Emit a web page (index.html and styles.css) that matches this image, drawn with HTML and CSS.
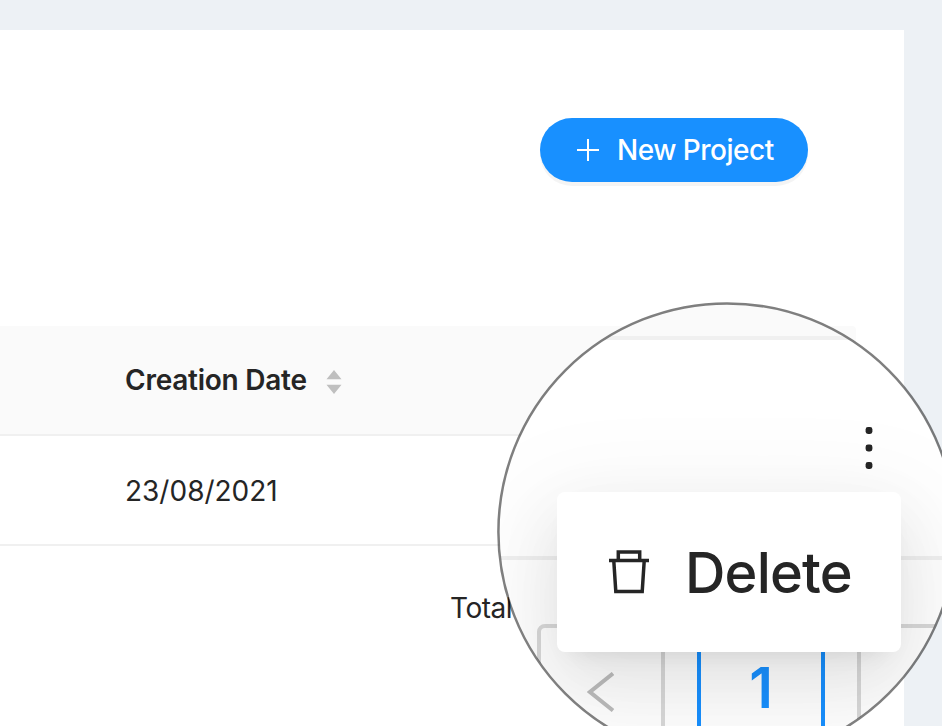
FILE: index.html
```
<!DOCTYPE html>
<html lang="en">
<head>
<meta charset="utf-8">
<title>Projects</title>
<link rel="stylesheet" href="styles.css">
</head>
<body>
<main class="card">
  <div class="toolbar">
    <button class="new-project" type="button">
      <svg class="plus" viewBox="0 0 24 24"><path d="M12 1v22M1 12h22"/></svg>
      <span class="label">New Project</span>
    </button>
  </div>
  <section class="table">
    <div class="row head">
      <span class="title">Creation Date</span>
      <svg class="sorter" viewBox="0 0 16 24"><path d="M8 0l7.500 9.300H.5zM8 24L.5 14.700h15z"/></svg>
    </div>
    <div class="row"><span class="date">23/08/2021</span></div>
  </section>
  <footer class="footer"><span class="total">Total</span></footer>
</main>
<aside class="lens">
  <div class="lens-head"></div>
  <div class="lens-row">
    <svg class="dots" viewBox="0 0 8 43"><rect x=".6" y=".1" width="6.800" height="6.800" rx="2.400"/><rect x=".6" y="17.600" width="6.800" height="6.800" rx="2.400"/><rect x=".6" y="35.100" width="6.800" height="6.800" rx="2.400"/></svg>
  </div>
  <div class="pages">
    <div class="page"><svg class="chevron" viewBox="0 0 28 40"><path d="M26 1.500L3 20l23 18.500"/></svg></div>
    <div class="page active"><span>1</span></div>
    <div class="page"></div>
  </div>
  <div class="menu">
    <svg class="trash" viewBox="0 0 42 46"><path d="M1 11.500h40M10.300 11V3h21.400v8M5.800 12l2 30.500h26.400l2-30.500"/></svg>
    <span class="delete">Delete</span>
  </div>
</aside>
<svg class="ring" viewBox="0 0 460 460"><circle cx="230" cy="230" r="228.600"/></svg>
</body>
</html>
```
FILE: styles.css
```
* { box-sizing: border-box; }
body {
  margin: 0;
  height: 726px;
  padding: 30px 38px 0 0;
  position: relative;
  overflow: hidden;
  background: #edf1f5;
  color: #252525;
  font: 28px/44px Inter, "Liberation Sans", sans-serif;
}
.card { height: 696px; background: #fff; }
.toolbar { display: flex; justify-content: flex-end; height: 296px; padding: 88px 96px 0 0; }
.new-project {
  display: flex;
  align-items: center;
  width: 268px;
  height: 64px;
  padding: 0 0 0 36px;
  gap: 17px;
  border: 0;
  border-radius: 32px;
  background: #1890ff;
  box-shadow: 0 4px 0 rgba(0, 0, 0, .045);
  color: #fff;
  font: 450 28px/44px Inter, sans-serif;
  letter-spacing: -.5px;
  white-space: nowrap;
}
.plus { width: 24px; height: 24px; fill: none; stroke: #fff; stroke-width: 2; }
.table { width: 856px; }
.row {
  display: flex;
  align-items: center;
  height: 110px;
  padding-left: 125px;
  border-bottom: 2px solid #f0f0f0;
}
.head { gap: 19px; border-radius: 0 4px 0 0; background: #fafafa; }
.title { font-weight: 580; letter-spacing: -.25px; }
.sorter { width: 16px; height: 24px; margin-top: 4px; fill: #bfbfbf; }
.date { padding-top: 1px; }
.footer { padding: 40px 0 0 450px; letter-spacing: -.5px; }
.lens {
  position: absolute;
  left: 499px;
  top: 304px;
  width: 456px;
  height: 456px;
  overflow: hidden;
  border-radius: 50%;
  background: #fff;
}
.ring {
  position: absolute;
  left: 497px;
  top: 302px;
  width: 460px;
  height: 460px;
  fill: none;
  stroke: rgba(0, 0, 0, .5);
  stroke-width: 2.500;
}
.lens-head { height: 36px; background: #fafafa; border-bottom: 4px solid #f0f0f0; }
.lens-row { height: 220px; padding: 87px 0 0 366px; border-bottom: 4px solid #f0f0f0; }
.dots { display: block; width: 8px; height: 43px; fill: #252525; }
.pages { display: flex; gap: 32px; padding: 64px 0 0 38px; }
.page {
  display: flex;
  justify-content: center;
  flex: none;
  width: 128px;
  height: 128px;
  border: 4px solid #d9d9d9;
  border-radius: 8px;
}
.active { border-color: #1890ff; color: #1890ff; font-size: 56px; font-weight: 600; line-height: 120px; }
.chevron { width: 28px; height: 40px; margin-top: 44px; fill: none; stroke: #bdbdbd; stroke-width: 4; }
.menu {
  position: absolute;
  left: 58px;
  top: 188px;
  display: flex;
  align-items: center;
  width: 344px;
  height: 160px;
  padding-left: 51px;
  gap: 35px;
  border-radius: 8px;
  background: #fff;
  box-shadow: 0 12px 24px -16px rgba(0, 0, 0, .12), 0 24px 64px rgba(0, 0, 0, .08), 0 36px 112px 32px rgba(0, 0, 0, .05);
}
.trash { width: 42px; height: 46px; fill: none; stroke: #252525; stroke-width: 3.500; }
.delete { padding-top: 2px; font-size: 56px; font-weight: 450; letter-spacing: -.8px; line-height: 88px; }
```
